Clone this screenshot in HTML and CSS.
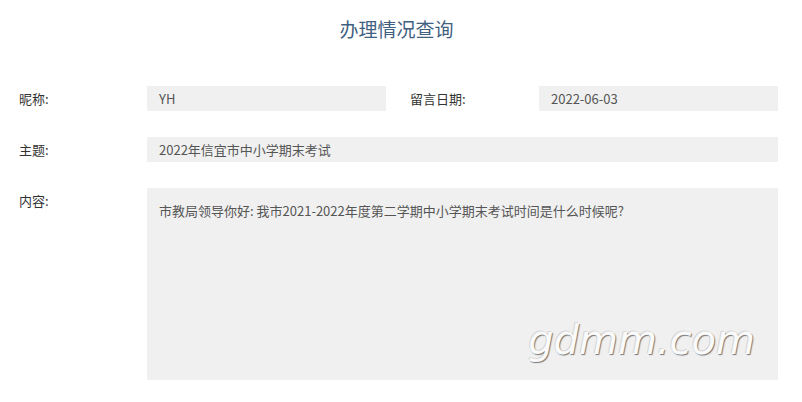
FILE: index.html
```html
<!DOCTYPE html>
<html lang="zh-CN">
<head>
<meta charset="UTF-8">
<title>办理情况查询</title>
<link rel="stylesheet" href="styles.css">
</head>
<body>
<div class="page">
  <h1 class="titulo">办理情况查询</h1>

  <div class="linha">
    <label>昵称:</label>
    <div class="campo">YH</div>
    <label class="rotulo-dir">留言日期:</label>
    <div class="campo">2022-06-03</div>
  </div>

  <div class="linha">
    <label>主题:</label>
    <div class="campo largo">2022年信宜市中小学期末考试</div>
  </div>

  <div class="linha">
    <label>内容:</label>
    <div class="campo largo conteudo">
      市教局领导你好: 我市2021-2022年度第二学期中小学期末考试时间是什么时候呢?
      <span class="marca">gdmm.com</span>
    </div>
  </div>
</div>
</body>
</html>
```

FILE: styles.css
```css
* { box-sizing:border-box; margin:0; padding:0; }
body {
  font-family:"Noto Sans CJK SC","Noto Sans",sans-serif;
  background:#fff; color:#333;
}
.page { width:802px; padding:17px 24px 0 19px; }
.titulo {
  font-size:19px; font-weight:400; color:#3f607f;
  text-align:center; line-height:24px; margin-bottom:45px;
  padding-right:4px;
}
.linha { display:flex; align-items:flex-start; margin-bottom:26px; }
label {
  width:128px; flex:none; font-size:13px; line-height:25px; color:#333;
}
.rotulo-dir { margin-left:24px; width:129px; }
.campo {
  width:239px; height:25px; line-height:25px; padding:0 12px;
  background:#f0f0f0; color:#555; font-size:13px;
}
.campo.largo { width:631px; }
.conteudo {
  position:relative; height:192px; padding-top:10px;
}
.marca {
  position:absolute; right:23px; bottom:20px;
  font-family:"DejaVu Sans",sans-serif; font-style:italic; font-weight:200;
  font-size:40px; line-height:1; color:#fafafa;
  text-shadow:1px 1px 1px #777, -1px -1px 0 #d8d8d8;
}
```
